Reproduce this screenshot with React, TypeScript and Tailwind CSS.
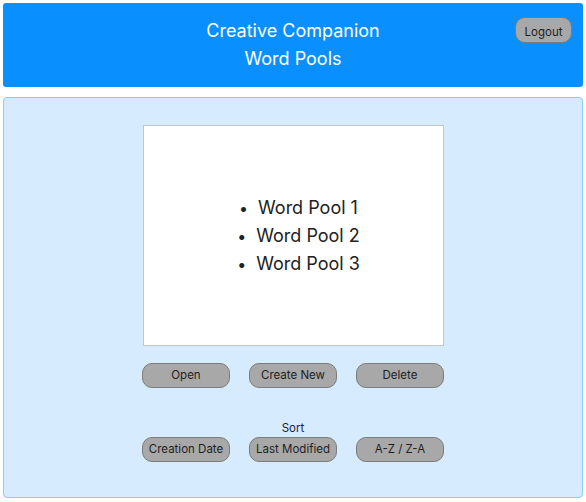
import React from 'react';

const pools = ['Word Pool 1', 'Word Pool 2', 'Word Pool 3'];

function PillButton({ children }: { children: React.ReactNode }) {
  return (
    <button className="h-[25px] w-[88px] rounded-[10px] border border-[#7c7c7c] bg-[#a8a8a8] text-[11.5px] leading-none text-[#1e1e1e]">
      {children}
    </button>
  );
}

export default function App() {
  return (
    <div className="flex h-[502px] flex-col gap-[10px] bg-white p-[3px] pb-[4px] font-['Inter',sans-serif]">
      <header className="relative flex h-[84px] flex-col items-center justify-center rounded-[3px] bg-[#0a8ffe] text-[18px] leading-[28px] text-white">
        <div>Creative Companion</div>
        <div>Word Pools</div>
        <button className="absolute right-[11px] top-[14px] h-[26px] w-[57px] rounded-[10px] border border-[#7c7c7c] bg-[#a8a8a8] text-[11.5px] text-[#1e1e1e]">
          Logout
        </button>
      </header>

      <main className="flex flex-1 flex-col items-center rounded-[4px] border border-[#8dcaf6] bg-[#d6ebfe] pt-[27px]">
        <div className="flex h-[221px] w-[301px] items-center justify-center border border-[#c4c4c4] bg-white">
          <ul className="flex flex-col items-center pl-[11px] text-[18px] leading-[28px] text-[#222]">
            {pools.map((p) => (
              <li key={p} className="flex items-center">
                <span className="mr-[10px] text-[16px]">•</span>
                {p}
              </li>
            ))}
          </ul>
        </div>

        <div className="mt-[17px] flex gap-[19px]">
          <PillButton>Open</PillButton>
          <PillButton>Create New</PillButton>
          <PillButton>Delete</PillButton>
        </div>

        <div className="mt-[32px] text-[11.5px] leading-[17px] text-[#1e1e1e]">Sort</div>
        <div className="flex gap-[19px]">
          <PillButton>Creation Date</PillButton>
          <PillButton>Last Modified</PillButton>
          <PillButton>A-Z / Z-A</PillButton>
        </div>
      </main>
    </div>
  );
}
